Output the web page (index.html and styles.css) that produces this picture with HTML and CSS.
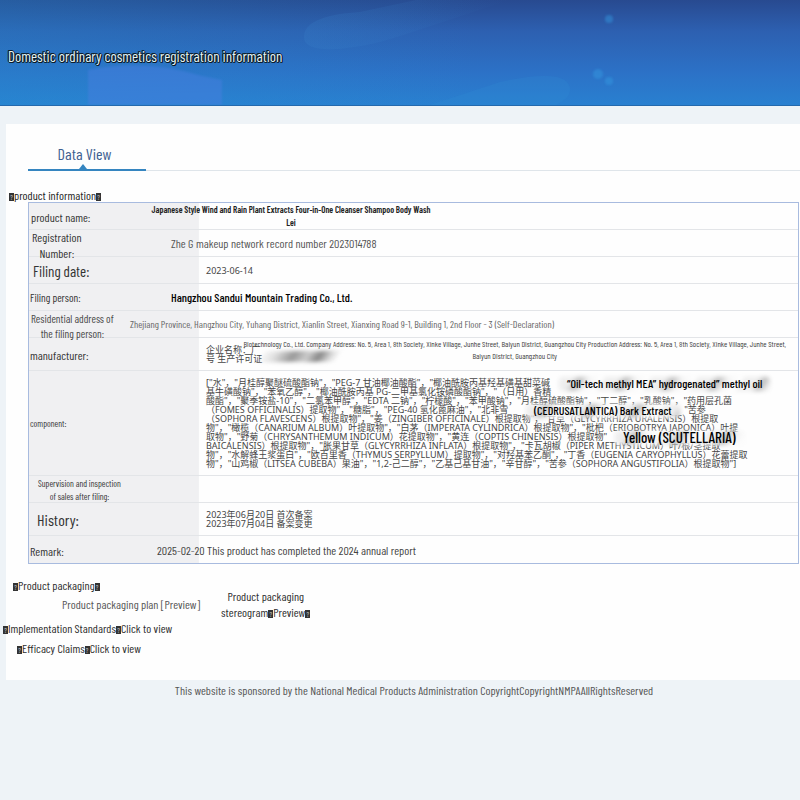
FILE: index.html
```html
<!DOCTYPE html>
<html lang="en">
<head>
<meta charset="utf-8">
<title>Domestic ordinary cosmetics registration information</title>
<link rel="stylesheet" href="styles.css">
</head>
<body>
<header class="banner">
  <svg class="banner-art" viewBox="0 0 800 105" preserveAspectRatio="none" aria-hidden="true">
    <defs>
      <filter id="soft"><feGaussianBlur stdDeviation="1"/></filter>
      <linearGradient id="streak" x1="0" x2="1"><stop offset="0" stop-color="#3b86cd" stop-opacity=".2"/><stop offset="1" stop-color="#3b86cd" stop-opacity="0"/></linearGradient>
    </defs>
    <path d="M304 37C304 20 330 14 360 12L510 -20V0L400 36C365 48 304 58 304 37Z" fill="url(#streak)"/>
    <path d="M88 105V70Q145 58 202 76L222 80V105Z" fill="#477fe0" opacity=".5" filter="url(#soft)"/>
    <path d="M430 105L500 82Q570 67 570 90Q570 98 556 105Z" fill="#3191d8" opacity=".2"/>
    <g fill="#359be2" opacity=".45" filter="url(#soft)"><circle cx="609" cy="19" r="4"/><circle cx="598" cy="74" r="5"/><circle cx="609" cy="81" r="4"/></g>
  </svg>
  <h1>Domestic ordinary cosmetics registration information</h1>
</header>
<main class="panel">
  <nav class="tabs"><a href="#data" class="tab">Data View</a></nav>
  <h2 class="section-title"><span class="mark">?</span>product information<span class="mark">?</span></h2>
  <table class="info" id="data">
    <colgroup><col class="col-label"><col></colgroup>
    <tr class="row"><th scope="row">product name:</th><td><p class="name">Japanese Style Wind and Rain Plant Extracts Four-in-One Cleanser Shampoo Body Wash<br>Lei</p></td></tr>
    <tr class="row"><th scope="row"><p class="label-two">Registration<br>Number:</p></th><td class="in-40 mid">Zhe G makeup network record number 2023014788</td></tr>
    <tr class="row"><th scope="row" class="label-large">Filing date:</th><td class="in-76 native">2023-06-14</td></tr>
    <tr class="row"><th scope="row" class="label-person">Filing person:</th><td class="in-40 company">Hangzhou Sandui Mountain Trading Co., Ltd.</td></tr>
    <tr class="row"><th scope="row"><p class="label-address">Residential address of<br>the filing person:</p></th><td class="address">Zhejiang Province, Hangzhou City, Yuhang District, Xianlin Street, Xianxing Road 9-1, Building 1, 2nd Floor - 3 (Self-Declaration)</td></tr>
    <tr class="row tall"><th scope="row" class="label-mid">manufacturer:</th><td class="in-76 native maker">企业名称：广<br>号 生产许可证<span class="smudge"></span>
      <p class="maker-note">Biotechnology Co., Ltd. Company Address: No. 5, Area 1, 8th Society, Xinke Village, Junhe Street, Baiyun District, Guangzhou City Production Address: No. 5, Area 1, 8th Society, Xinke Village, Junhe Street,<br>Baiyun District, Guangzhou City</p></td></tr>
    <tr class="row parts"><th scope="row" class="label-small">component:</th><td class="in-76 native component">["水"，"月桂醇聚醚硫酸酯钠"，"PEG-7 甘油椰油酸酯"，"椰油酰胺丙基羟基磺基甜菜碱<br>基牛磺酸钠"，"苯氧乙醇"，"椰油酰胺丙基 PG-二甲基氯化铵磷酸酯钠"，"（日用）香精<br>酸酯"，"聚季铵盐-10"，"二氯苯甲醇"，"EDTA 二钠"，"柠檬酸"，"苯甲酸钠"，"月桂醇硫酸酯钠"，"丁二醇"，"乳酸钠"，"药用层孔菌<br>（FOMES OFFICINALIS）提取物"，"糖脂"，"PEG-40 氢化蓖麻油"，"北非雪<span class="gap-bark"></span>"苦参<br>（SOPHORA FLAVESCENS）根提取物"，"姜（ZINGIBER OFFICINALE）根提取物"，"甘草（GLYCYRRHIZA URALENSIS）根提取<br>物"，"橄榄（CANARIUM ALBUM）叶提取物"，"白茅（IMPERATA CYLINDRICA）根提取物"，"枇杷（ERIOBOTRYA JAPONICA）叶提<br>取物"，"野菊（CHRYSANTHEMUM INDICUM）花提取物"，"黄连（COPTIS CHINENSIS）根提取物"<br>BAICALENSIS）根提取物"，"胀果甘草（GLYCYRRHIZA INFLATA）根提取物"，"卡瓦胡椒（PIPER METHYSTICUM）叶/根/茎提取<br>物"，"水解蜂王浆蛋白"，"欧百里香（THYMUS SERPYLLUM）提取物"，"对羟基苯乙酮"，"丁香（EUGENIA CARYOPHYLLUS）花蕾提取<br>物"，"山鸡椒（LITSEA CUBEBA）果油"，"1,2-己二醇"，"乙基己基甘油"，"辛甘醇"，"苦参（SOPHORA ANGUSTIFOLIA）根提取物"]
      <span class="note note-oil">“Oil-tech methyl MEA” hydrogenated” methyl oil</span><span class="note note-bark">(CEDRUSATLANTICA) Bark Extract</span><span class="note note-yellow">Yellow (SCUTELLARIA)</span></td></tr>
    <tr class="row"><th scope="row"><p class="label-sales">Supervision and inspection<br>of sales after filing:</p></th><td></td></tr>
    <tr class="row tall"><th scope="row" class="label-history">History:</th><td class="in-76 native">2023年06月20日 首次备案<br>2023年07月04日 备案变更</td></tr>
    <tr class="row"><th scope="row" class="label-mid">Remark:</th><td class="in-27 remark">2025-02-20 This product has completed the 2024 annual report</td></tr>
  </table>
  <section class="links">
    <p class="pack"><span class="mark">?</span>Product packaging<span class="mark">?</span></p>
    <div class="previews"><a href="#plan" class="plan">Product packaging plan [Preview]</a><a href="#stereogram" class="stereo">Product packaging<br>stereogram<span class="mark">?</span>Preview<span class="mark">?</span></a></div>
    <p class="standards"><span class="mark">?</span>Implementation Standards<span class="mark">?</span><a href="#standards">Click to view</a></p>
    <p class="claims"><span class="mark">?</span>Efficacy Claims<span class="mark">?</span><a href="#claims">Click to view</a></p>
  </section>
</main>
<footer>This website is sponsored by the National Medical Products Administration CopyrightCopyrightNMPAAllRightsReserved</footer>
</body>
</html>
```
FILE: styles.css
```css
* { box-sizing: border-box; }
body { margin: 0; min-height: 100vh; overflow-x: hidden; background: #eef3f7; color: #333; font-family: "Barlow Condensed", "Roboto", sans-serif; font-size: 12px; font-weight: 400; line-height: 16px; }
h1, h2, p { margin: 0; font-weight: 400; }
a { color: inherit; text-decoration: none; }

.banner { position: relative; height: 106px; padding: 47px 8px; background: linear-gradient(#284a90, #2d60b1 30%, #2c72c7 70%, #2980d0); border-bottom: 1px solid #2469ad; }
.banner::before { content: ""; position: absolute; inset: 0; background: linear-gradient(90deg, #2396d440, #2396d400 60%); }
.banner-art { position: absolute; inset: 0; width: 100%; height: 100%; }
h1 { position: relative; font-size: 15px; line-height: 18px; color: #e5f5f7; white-space: nowrap; text-shadow: 1px 0 #0b1c2b, -1px 0 #0b1c2b, 0 1px #0b1c2b, 0 -1px #0b1c2b, 1px 1px #0b1c2b, -1px -1px #0b1c2b; }

.panel { margin: 18px 0 0 6px; padding-top: 20px; padding-bottom: 24px; background: #fefefe; }
.tabs { display: flex; margin-left: 22px; border-bottom: 1px solid #dfe5ea; }
.tab { position: relative; width: 118px; height: 27px; padding-right: 5px; border-bottom: 2px solid #3585c0; margin-bottom: -1px; text-align: center; font-size: 16px; line-height: 19px; color: #3d6090; }
.tab::after { content: ""; position: absolute; left: 51px; bottom: 0; border: 4px solid transparent; border-top: 0; border-bottom: 5px solid #3585c0; }
.section-title { margin: 16px 0 -1px 3px; position: relative; font-size: 12px; line-height: 16px; color: #222; }
.mark { display: inline-block; width: 5px; height: 8px; overflow: hidden; vertical-align: -1px; background: #333; color: #ccc; font-size: 7px; line-height: 8px; text-align: center; }

.info { width: calc(100% - 23px); margin-left: 22px; table-layout: fixed; border-collapse: separate; border-spacing: 0; border: 1px solid #a8bbdf; background: linear-gradient(90deg, #f0f0f2 169px, #e4e5e8 169px, #fefefe 170px); }
.col-label { width: 101px; }
.row { height: 27px; }
.row.tall { height: 33px; }
.row.parts { height: 105px; }
th, td { padding: 0; text-align: left; vertical-align: middle; font-weight: 400; white-space: nowrap; border-bottom: 1px solid #e3e5e8; }
.row:last-child > * { border-bottom: 0; }
th { padding: 2px 0 0 2px; font-size: 12px; line-height: 14px; }
.label-two, .label-address, .label-sales { width: max-content; text-align: center; }
.label-two { margin: -4px 0 -6px 1px; line-height: 16px; }
.label-large { padding-left: 4px; font-size: 15px; }
.label-person { padding-left: 1px; font-size: 11px; }
.label-address { margin: -4px 0 -5px; font-size: 11px; line-height: 15px; color: #484848; }
.label-mid { padding-left: 1px; }
.label-small { font-size: 9px; padding-left: 1px; }
.label-sales { margin: -2px 0 -2px 7px; font-size: 9px; line-height: 13px; }
.label-history { font-size: 16px; padding-left: 8px; }
.in-27 { padding-left: 27px; }
.in-40 { padding-left: 41px; }
.in-76 { padding-left: 76px; }
.name { width: 322px; text-align: center; font-size: 9px; font-weight: 600; line-height: 13px; color: #222; }
.mid { color: #555; }
.company { color: #000; font-weight: 500; }
.address { color: #666; font-size: 10px; }
.remark { color: #444; }
.native { font-family: "Noto Sans", "Noto Sans CJK SC", sans-serif; font-size: 9px; line-height: 9px; color: #454545; }

.maker, .component { position: relative; }
.smudge { position: absolute; left: 130px; top: 13px; width: 78px; height: 11px; background: linear-gradient(100deg, #fff0, #ddd 20%, #999 42%, #ccc 60%, #888 75%, #ddd 90%, #fff0); filter: blur(2px); transform: skewX(-25deg); }
.maker-note { position: absolute; right: 12px; top: 0; text-align: center; font-family: "Barlow Condensed", "Roboto", sans-serif; font-size: 8px; line-height: 12px; color: #444; }
.gap-bark { display: inline-block; width: 176px; }
.note { position: absolute; isolation: isolate; font-family: "Barlow Condensed", "Roboto", sans-serif; font-weight: 500; color: #000; line-height: 15px; }
.note::before { content: ""; position: absolute; z-index: -1; inset: 1px -8px 0; border-radius: 4px; background: repeating-linear-gradient(125deg, #eee 0 12px, #bbb 18px, #f5f5f5 26px, #fff 38px); filter: blur(2px); }
.note-oil { left: 437px; top: 5px; font-size: 12px; }
.note-bark { left: 404px; top: 32px; font-size: 12px; }
.note-yellow { left: 493px; top: 59px; font-size: 15px; }

.links { padding-top: 13px; line-height: 16px; color: #2c2c2c; }
.pack { margin-left: 7px; }
.previews { display: flex; align-items: center; gap: 21px; margin: -5px 0 0 56px; }
.plan { color: #555; }
.stereo { text-align: center; }
.standards { margin-left: -3px; }
.claims { margin: 4px 0 0 11px; }
footer { padding: 2px 0 0 28px; text-align: center; font-size: 12px; line-height: 16px; color: #555; }
```
